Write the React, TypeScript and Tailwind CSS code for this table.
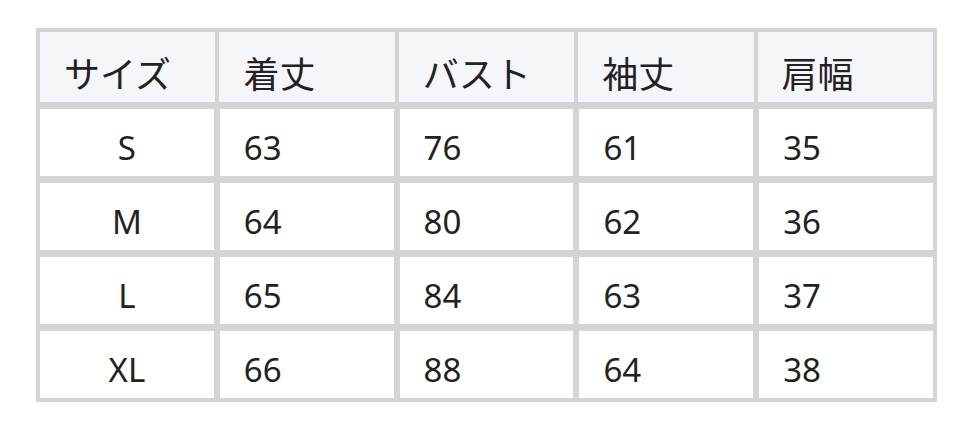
import React from "react";

const headers = ["サイズ", "着丈", "バスト", "袖丈", "肩幅"];
const rows = [
  ["S", "63", "76", "61", "35"],
  ["M", "64", "80", "62", "36"],
  ["L", "65", "84", "63", "37"],
  ["XL", "66", "88", "64", "38"],
];

export default function App() {
  return (
    <div
      className="w-[972px] h-[429px] bg-white pt-[28px] pl-[36px]"
      style={{ fontFamily: '"Noto Sans", "Noto Sans CJK JP", sans-serif' }}
    >
      <div className="w-[901px] bg-[#d4d4d4] p-[4px] flex flex-col gap-[7px] text-[#222222] text-[33px]">
        <div className="grid grid-cols-5 gap-x-[4px] h-[70px]">
          {headers.map((h) => (
            <div
              key={h}
              className="bg-[#f5f6fa] flex items-center pl-[24px] pt-[10px] text-[36px] leading-none"
              style={{ fontFamily: '"Noto Sans CJK JP", sans-serif' }}
            >
              {h}
            </div>
          ))}
        </div>
        {rows.map((r) => (
          <div key={r[0]} className="grid grid-cols-5 gap-x-[6px] h-[67px]">
            {r.map((c, i) => (
              <div
                key={i}
                className={
                  i === 0
                    ? "bg-white flex items-center justify-center pt-[10px]"
                    : "bg-white flex items-center pl-[24px] pt-[10px]"
                }
              >
                {c}
              </div>
            ))}
          </div>
        ))}
      </div>
    </div>
  );
}
